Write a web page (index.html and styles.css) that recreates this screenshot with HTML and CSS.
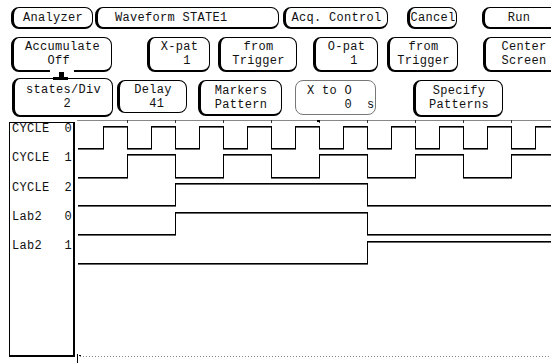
FILE: index.html
```html
<!DOCTYPE html>
<html lang="en">
<head>
    <meta charset="UTF-8">
    <title>Waveform STATE1</title>
    <link rel="stylesheet" href="styles.css">
</head>
<body>
<div class="screen">
    <!-- 第一行：菜单 -->
    <div class="row row-menu">
        <div class="btn b-analyzer">Analyzer</div>
        <div class="btn b-waveform">Waveform STATE1</div>
        <div class="btn b-acq">Acq. Control</div>
        <div class="btn b-cancel">Cancel</div>
        <div class="btn b-run">Run</div>
    </div>

    <!-- 第二行 -->
    <div class="row row-mid">
        <div class="btn b-accum">
            <span>Accumulate</span>
            <span>   Off    </span>
            <span class="trig-mark"></span>
        </div>
        <div class="btn b-xpat"><span>X-pat</span><span>   1 </span></div>
        <div class="btn b-trig1"><span>from</span><span>Trigger</span></div>
        <div class="btn b-opat"><span>O-pat</span><span>   1 </span></div>
        <div class="btn b-trig2"><span>from</span><span>Trigger</span></div>
        <div class="btn b-center"><span>Center</span><span>Screen</span></div>
    </div>

    <!-- 第三行 -->
    <div class="row row-low">
        <div class="btn b-states"><span>states/Div</span><span>     2    </span></div>
        <div class="btn b-delay"><span>Delay</span><span>  41 </span></div>
        <div class="btn b-markers"><span>Markers</span><span>Pattern</span></div>
        <div class="field b-xo"><span>X to O</span><span>     0  s</span></div>
        <div class="btn b-specify"><span>Specify</span><span>Patterns</span></div>
    </div>

    <!-- 波形区 -->
    <div class="wave">
        <div class="labels">
            <div class="label"><span>CYCLE</span><span>0</span></div>
            <div class="label"><span>CYCLE</span><span>1</span></div>
            <div class="label"><span>CYCLE</span><span>2</span></div>
            <div class="label"><span>Lab2</span><span>0</span></div>
            <div class="label"><span>Lab2</span><span>1</span></div>
        </div>
        <svg class="traces" width="476" height="243" viewBox="75 120 476 243">
            <!-- 顶部刻度线 -->
            <path d="M77 120.5 H551" stroke="#888" fill="none"/>
            <path d="M127.5 120 V123 M175.5 120 V123 M223.5 120 V123 M271.5 120 V123 M319.5 120 V123 M367.5 120 V123 M415.5 120 V123 M463.5 120 V123 M511.5 120 V123"
                  stroke="#333" fill="none"/>
            <rect x="317" y="120" width="3" height="2" fill="#000"/>

            <g fill="none" shape-rendering="crispEdges">
                <g stroke="#666" transform="translate(0,1)">
                    <path d="M78 148.5 H103.5 V126.5 H127.5 V148.5 H151.5 V126.5 H175.5 V148.5 H199.5 V126.5 H223.5 V148.5 H247.5 V126.5 H271.5 V148.5 H295.5 V126.5 H319.5 V148.5 H343.5 V126.5 H367.5 V148.5 H391.5 V126.5 H415.5 V148.5 H439.5 V126.5 H463.5 V148.5 H487.5 V126.5 H511.5 V148.5 H535.5 V126.5 H551"/>
                    <path d="M78 177.5 H127.5 V154.5 H175.5 V177.5 H223.5 V154.5 H271.5 V177.5 H319.5 V154.5 H367.5 V177.5 H415.5 V154.5 H463.5 V177.5 H511.5 V154.5 H551"/>
                    <path d="M78 205.5 H175.5 V183.5 H367.5 V205.5 H551"/>
                    <path d="M78 234.5 H175.5 V212.5 H367.5 V234.5 H551"/>
                    <path d="M78 263.5 H367.5 V241.5 H551"/>
                </g>
                <g stroke="#000">
                    <path d="M78 148.5 H103.5 V126.5 H127.5 V148.5 H151.5 V126.5 H175.5 V148.5 H199.5 V126.5 H223.5 V148.5 H247.5 V126.5 H271.5 V148.5 H295.5 V126.5 H319.5 V148.5 H343.5 V126.5 H367.5 V148.5 H391.5 V126.5 H415.5 V148.5 H439.5 V126.5 H463.5 V148.5 H487.5 V126.5 H511.5 V148.5 H535.5 V126.5 H551"/>
                    <path d="M78 177.5 H127.5 V154.5 H175.5 V177.5 H223.5 V154.5 H271.5 V177.5 H319.5 V154.5 H367.5 V177.5 H415.5 V154.5 H463.5 V177.5 H511.5 V154.5 H551"/>
                    <path d="M78 205.5 H175.5 V183.5 H367.5 V205.5 H551"/>
                    <path d="M78 234.5 H175.5 V212.5 H367.5 V234.5 H551"/>
                    <path d="M78 263.5 H367.5 V241.5 H551"/>
                </g>
            </g>

            <!-- 底部虚线和游标 -->
            <path d="M80 356.5 H551" stroke="#888" stroke-dasharray="1 2" fill="none"/>
            <path d="M77.5 354 V363" stroke="#000" fill="none"/>
            <rect x="79" y="355" width="2" height="1" fill="#000"/>
        </svg>
    </div>
</div>
</body>
</html>
```

FILE: styles.css
```css
body {
    margin: 0;
    background-color: #ffffff;
    overflow: hidden;
}

.screen {
    width: 551px;
    height: 363px;
    padding-top: 7px;
    box-sizing: border-box;
    overflow: hidden;
    font-family: "Liberation Mono", "DejaVu Sans Mono", monospace;
    font-size: 12px;
    letter-spacing: 0.3px;
    color: #111111;
}

.row {
    display: flex;
    align-items: flex-start;
}

.btn,
.field {
    flex: none;
    display: flex;
    flex-direction: column;
    justify-content: center;
    align-items: center;
    box-sizing: border-box;
    border: 1px solid #000000;
    border-left-width: 3px;
    border-bottom-width: 2px;
    border-radius: 8px;
    line-height: 14px;
    white-space: pre;
}

.field {
    border: 1px solid #777777;
    align-items: flex-start;
    padding-left: 11px;
}

/* 第一行 */
.row-menu .btn {
    height: 22px;
}

.b-analyzer { margin-left: 11px; width: 82px; }
.b-waveform { margin-left: 2px; width: 184px; align-items: flex-start; padding-left: 17px; }
.b-acq { margin-left: 4px; width: 105px; }
.b-cancel { margin-left: 19px; width: 50px; }
.b-run { margin-left: 25px; width: 80px; padding-right: 8px; }

/* 第二行 */
.row-mid {
    margin-top: 8px;
}

.row-mid .btn {
    height: 35px;
}

.b-accum { margin-left: 11px; width: 101px; position: relative; }
.b-xpat { margin-left: 35px; width: 63px; }
.b-trig1 { margin-left: 8px; width: 79px; }
.b-opat { margin-left: 16px; width: 65px; }
.b-trig2 { margin-left: 9px; width: 71px; }
.b-center { margin-left: 25px; width: 90px; padding-right: 10px; }

/* 触发标记 */
.trig-mark {
    position: absolute;
    left: 36px;
    top: 32px;
    width: 24px;
    height: 3px;
    background-color: #ffffff;
}

.trig-mark::before {
    content: "";
    position: absolute;
    left: 9px;
    top: 2px;
    width: 5px;
    height: 6px;
    background-color: #000000;
}

.trig-mark::after {
    content: "";
    position: absolute;
    left: 3px;
    top: 7px;
    width: 15px;
    height: 3px;
    background-color: #000000;
}

/* 第三行 */
.row-low {
    margin-top: 6px;
    height: 39px;
}

.b-states { margin-left: 12px; width: 101px; height: 39px; }
.b-delay { margin: 2px 0 0 4px; width: 70px; height: 33px; border-bottom-width: 1px; }
.b-markers { margin: 2px 0 0 11px; width: 84px; height: 36px; }
.b-xo { margin: 2px 0 0 13px; width: 81px; height: 35px; }
.b-specify { margin: 2px 0 0 37px; width: 90px; height: 37px; }

/* 波形区 */
.wave {
    display: flex;
    margin-top: 3px;
}

.labels {
    flex: none;
    margin-left: 9px;
    margin-top: 2px;
    width: 66px;
    height: 235px;
    box-sizing: border-box;
    border: 1px solid #000000;
    border-right-width: 2px;
    border-bottom-width: 2px;
    padding: 0 1px 0 2px;
}

.label {
    display: flex;
    justify-content: space-between;
    height: 29.25px;
    line-height: 12px;
}

.traces {
    display: block;
    flex: none;
}
```
